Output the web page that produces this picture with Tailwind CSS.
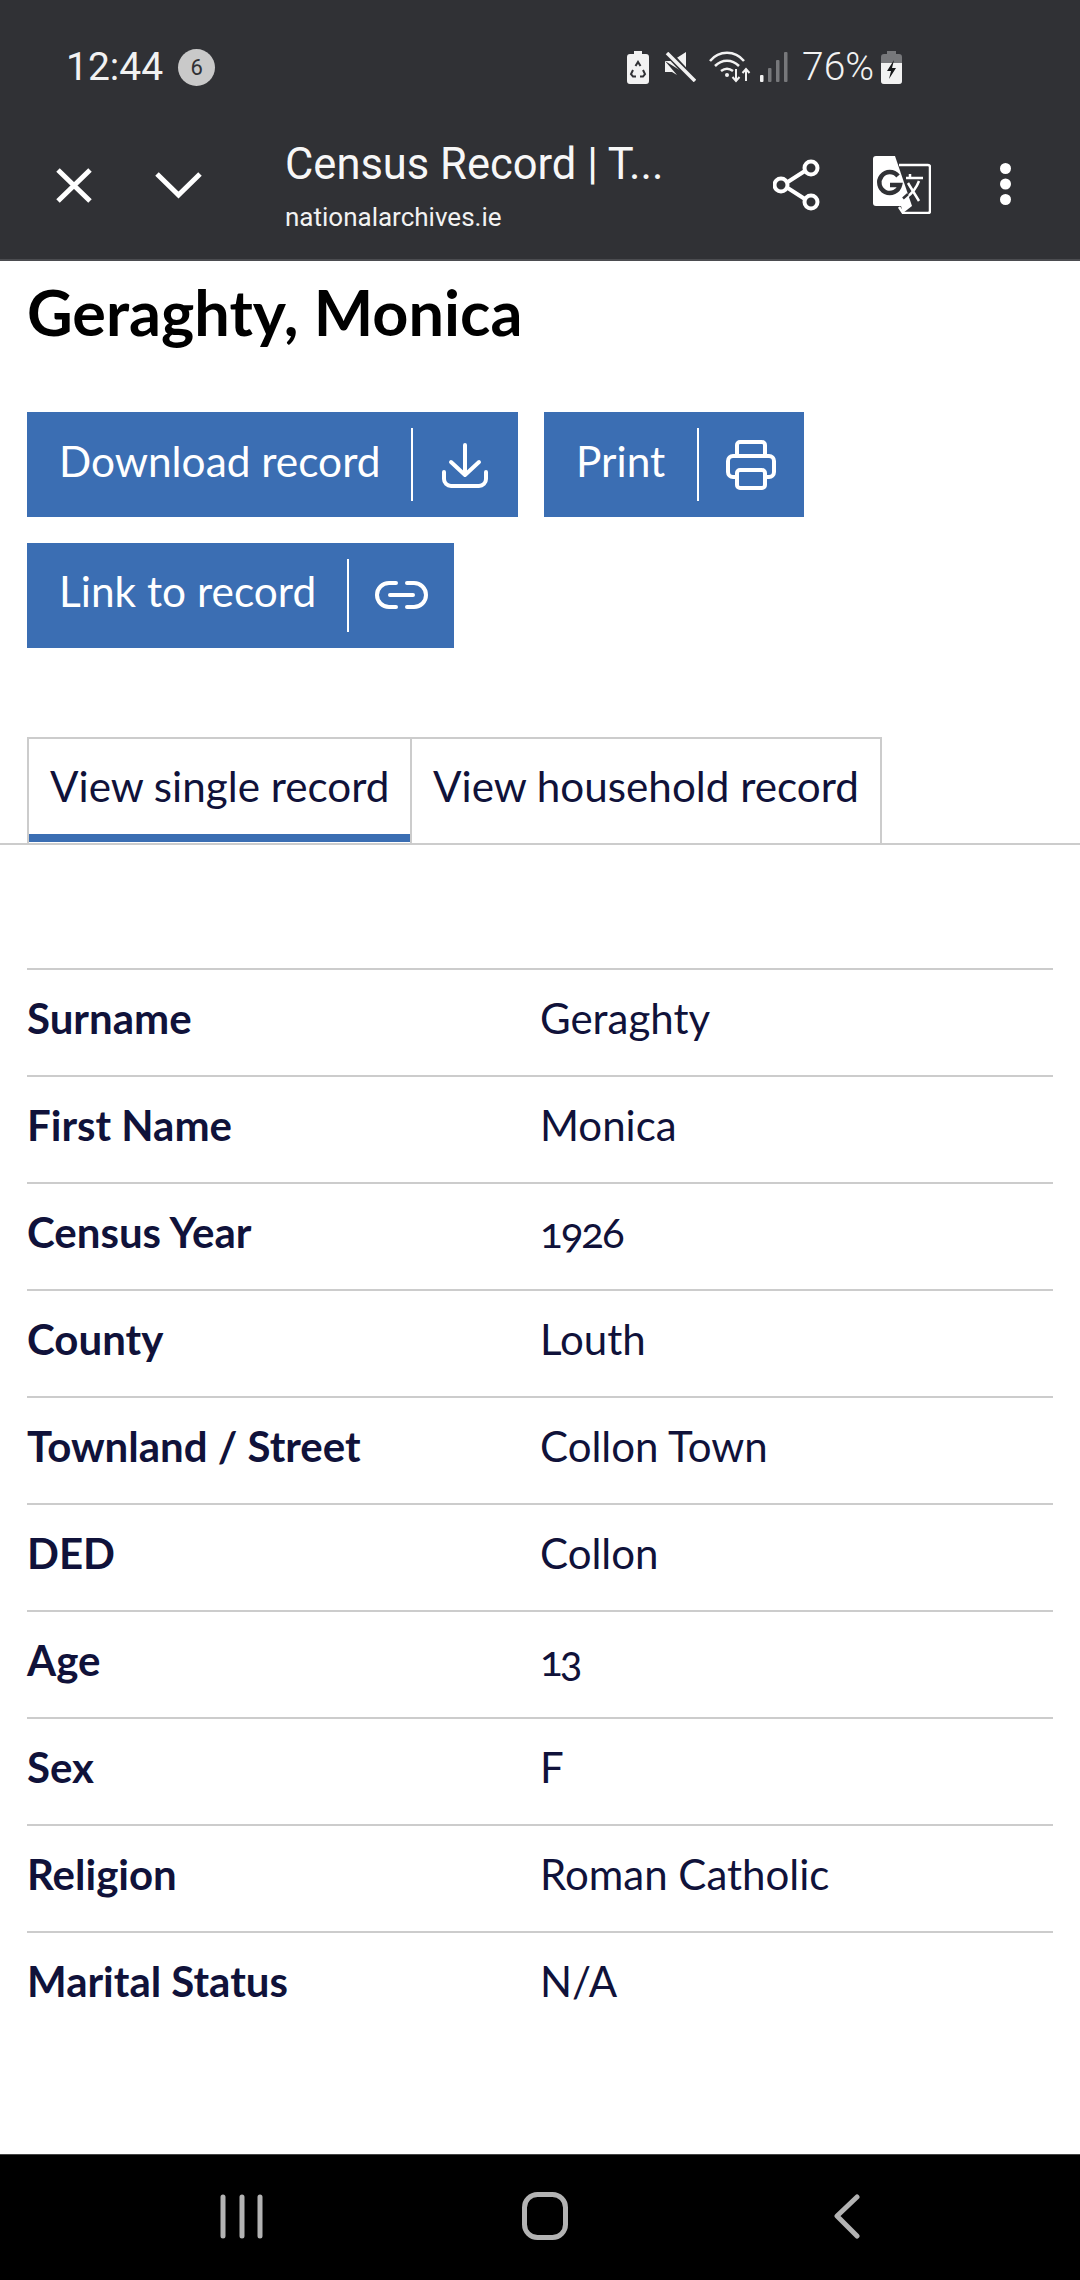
<!DOCTYPE html>
<html lang="en">
<head>
    <meta charset="UTF-8">
    <meta name="viewport" content="width=device-width, initial-scale=1.0">
    <title>Census Record</title>
    <script src="https://cdn.jsdelivr.net/npm/@tailwindcss/browser@4"></script>
</head>
<body class="w-[1080px] h-[2280px] overflow-hidden flex flex-col bg-white font-['Lato',sans-serif]">

    <!-- Browser chrome -->
    <header class="h-[261px] shrink-0 bg-[#303135] border-b-2 border-[#4b4c50] text-white font-['Roboto',sans-serif]">
        <div class="h-[134px] pt-[44px] pl-[66px] pr-[178px] flex items-start justify-between">
            <div class="flex items-center h-[46px]">
                <span class="text-[39px] leading-none text-[#f2f2f2]">12:44</span>
                <span class="ml-[15px] w-[37px] h-[37px] rounded-full bg-[#c9c9c9] text-[#303135] text-[22px] flex items-center justify-center">6</span>
            </div>
            <div class="flex items-center h-[46px]">
                <!-- recycle battery -->
                <svg class="w-[22px] h-[33px]" viewBox="0 0 22 33">
                    <path d="M7 0h8v3h4a3 3 0 0 1 3 3v24a3 3 0 0 1-3 3H3a3 3 0 0 1-3-3V6a3 3 0 0 1 3-3h4z" fill="#f2f2f2"/>
                    <path d="M8.500 15L11 11l2.500 4M16 19l2 4-2 2.500h-3M9 25.500H6L4 23l2-4" stroke="#303135" stroke-width="2" fill="none"/>
                </svg>
                <!-- mute -->
                <svg class="ml-[16px] w-[31px] h-[30px]" viewBox="0 0 31 30">
                    <path d="M0 9h7L21 0v22z M0 9v11h7l5 3z" fill="#f2f2f2"/>
                    <path d="M3 1l27 29" stroke="#303135" stroke-width="7"/>
                    <path d="M2 1l28 28" stroke="#f2f2f2" stroke-width="3.500"/>
                </svg>
                <!-- wifi -->
                <svg class="ml-[13px] w-[42px] h-[32px]" viewBox="0 0 42 32" fill="none" stroke="#f2f2f2" stroke-width="2.500">
                    <path d="M1 10C10 -1 26 -1 35 10"/>
                    <path d="M6 15C13 8 23 8 30 15"/>
                    <path d="M12 20c4-3 8-3 12 0"/>
                    <circle cx="18" cy="24" r="2" fill="#f2f2f2" stroke="none"/>
                    <path d="M27 18v12M23.500 26l3.500 4 3.500-4M37 30V18M33.500 22l3.500-4 3.500 4" stroke-width="2"/>
                </svg>
                <!-- signal -->
                <svg class="ml-[9px] w-[28px] h-[30px]" viewBox="0 0 28 30">
                    <rect x="0" y="23" width="3.500" height="7" rx="1" fill="#f2f2f2"/>
                    <rect x="8" y="16" width="3.500" height="14" rx="1" fill="#77787b"/>
                    <rect x="16" y="8" width="3.500" height="22" rx="1" fill="#77787b"/>
                    <rect x="24" y="0" width="3.500" height="30" rx="1" fill="#77787b"/>
                </svg>
                <span class="ml-[14px] text-[39px] leading-none font-light text-[#f2f2f2] w-[79px] whitespace-nowrap">76%</span>
                <!-- charging battery -->
                <svg class="w-[21px] h-[33px]" viewBox="0 0 21 33">
                    <path d="M6 0h9v3h3a3 3 0 0 1 3 3v24a3 3 0 0 1-3 3H3a3 3 0 0 1-3-3V6a3 3 0 0 1 3-3h3z" fill="#77787b"/>
                    <path d="M0 12h21v18a3 3 0 0 1-3 3H3a3 3 0 0 1-3-3z" fill="#f2f2f2"/>
                    <path d="M13 9l-7 11h4l-2 8 7-11h-4z" fill="#17181a"/>
                </svg>
            </div>
        </div>
        <div class="h-[125px] flex items-start">
            <svg class="ml-[56px] mt-[34px] w-[36px] h-[35px]" viewBox="0 0 36 35" fill="none" stroke="#fff" stroke-width="5">
                <path d="M2 2l32 31M34 2L2 33"/>
            </svg>
            <svg class="ml-[63px] mt-[38px] w-[47px] h-[27px]" viewBox="0 0 47 27" fill="none" stroke="#fff" stroke-width="5">
                <path d="M2 2l21.500 21L45 2"/>
            </svg>
            <div class="ml-[83px] w-[400px] mt-[5px]">
                <p class="text-[43.5px] leading-[52px] text-[#f7f7f7] whitespace-nowrap">Census Record | T...</p>
                <p class="text-[26px] leading-[34px] mt-[9px] text-[#f2f2f2]">nationalarchives.ie</p>
            </div>
            <svg class="ml-[88px] mt-[25px] w-[47px] h-[52px]" viewBox="0 0 47 52" fill="none" stroke="#fff" stroke-width="4">
                <path d="M35 10L10 26l25 16"/>
                <circle cx="38" cy="9" r="6.500" fill="#303135"/>
                <circle cx="8" cy="26" r="6.500" fill="#303135"/>
                <circle cx="38" cy="43" r="6.500" fill="#303135"/>
            </svg>
            <svg class="ml-[53px] mt-[22px] w-[58px] h-[58px]" viewBox="0 0 58 58">
                <path d="M26 9h29a2 2 0 0 1 2 2v44a2 2 0 0 1-2 2H30l-4-6" fill="#303135" stroke="#fff" stroke-width="2.500"/>
                <path d="M3 0h19l17 50H3a3 3 0 0 1-3-3V3a3 3 0 0 1 3-3z" fill="#fff"/>
                <path d="M28 50h11l-9 7z" fill="#fff"/>
                <path d="M25 20a10.500 10.500 0 1 0 2 9H17" fill="none" stroke="#303135" stroke-width="4.500"/>
                <path d="M33 22h17M37 18v4M46 25c-3 8-8 13-12 16M35 27l11 18" fill="none" stroke="#fff" stroke-width="2.500"/>
                <path d="M35 38l-5 4.500" fill="none" stroke="#303135" stroke-width="2.500"/>
            </svg>
            <svg class="ml-[69px] mt-[29px] w-[11px] h-[42px]" viewBox="0 0 11 42" fill="#fff">
                <circle cx="5.500" cy="5.500" r="5.500"/>
                <circle cx="5.500" cy="21" r="5.500"/>
                <circle cx="5.500" cy="36.500" r="5.500"/>
            </svg>
        </div>
    </header>

    <!-- Page content -->
    <main class="flex-1 min-h-0">
        <h1 class="ml-[27px] mt-[20px] text-[63px] leading-[62px] font-bold text-black">Geraghty, Monica</h1>

        <div class="mt-[69px] ml-[27px] w-[800px] flex flex-wrap gap-x-[26px] gap-y-[26px]">
            <a class="h-[105px] w-[491px] bg-[#3b6eb3] text-white flex items-center text-[42.4px]">
                <span class="pl-[32px] pb-[8px] w-[384px] whitespace-nowrap">Download record</span>
                <span class="w-[2px] h-[73px] bg-white"></span>
                <svg class="ml-[29px] w-[46px] h-[46px]" viewBox="0 0 46 46" fill="none" stroke="#fff" stroke-width="4" stroke-linecap="round" stroke-linejoin="round">
                    <path d="M23 3v30M9 20l14 13 14-13M2 30v7a7 7 0 0 0 7 7h28a7 7 0 0 0 7-7v-7"/>
                </svg>
            </a>
            <a class="h-[105px] w-[260px] bg-[#3b6eb3] text-white flex items-center text-[42.4px]">
                <span class="pl-[32px] pb-[8px] w-[153px]">Print</span>
                <span class="w-[2px] h-[73px] bg-white"></span>
                <svg class="ml-[27px] w-[50px] h-[50px]" viewBox="0 0 50 50" fill="none" stroke="#fff" stroke-width="4" stroke-linejoin="round">
                    <path d="M11 16V5a3 3 0 0 1 3-3h22a3 3 0 0 1 3 3v11"/>
                    <path d="M11 37H7a5 5 0 0 1-5-5V21a5 5 0 0 1 5-5h36a5 5 0 0 1 5 5v11a5 5 0 0 1-5 5h-4"/>
                    <path d="M11 33a3 3 0 0 1 3-3h22a3 3 0 0 1 3 3v12a3 3 0 0 1-3 3H14a3 3 0 0 1-3-3z"/>
                </svg>
            </a>
            <a class="h-[105px] w-[427px] bg-[#3b6eb3] text-white flex items-center text-[42.4px]">
                <span class="pl-[32px] pb-[10px] w-[320px] whitespace-nowrap">Link to record</span>
                <span class="w-[2px] h-[73px] bg-white"></span>
                <svg class="ml-[26px] mb-[2px] w-[53px] h-[28px]" viewBox="0 0 53 28" fill="none" stroke="#fff" stroke-width="4" stroke-linecap="round">
                    <path d="M21 2H14a12 12 0 0 0 0 24h7M32 2h7a12 12 0 0 1 0 24h-7M15 14h23"/>
                </svg>
            </a>
        </div>

        <!-- Tabs -->
        <div class="mt-[89px] h-[108px] border-b-2 border-[#ccc] pl-[27px] flex">
            <div class="w-[385px] h-[107px] border-2 border-b-0 border-[#ccc] relative pl-[21px] pt-[17px] text-[42.2px] leading-[60px] text-[#10123a] whitespace-nowrap">
                View single record
                <span class="absolute left-0 right-0 bottom-[2px] h-[8px] bg-[#3b6eb3]"></span>
            </div>
            <div class="w-[470px] h-[107px] border-2 border-b-0 border-l-0 border-[#ccc] pl-[21px] pt-[17px] text-[42.2px] leading-[60px] text-[#10123a] whitespace-nowrap">View household record</div>
        </div>

        <!-- Record table -->
        <dl class="mt-[123px] mx-[27px] text-[42px] text-[#10123a]">
            <div class="h-[107px] border-t-2 border-[#ccc] flex items-center pb-[8px]">
                <dt class="w-[513px] font-bold">Surname</dt><dd>Geraghty</dd>
            </div>
            <div class="h-[107px] border-t-2 border-[#ccc] flex items-center pb-[8px]">
                <dt class="w-[513px] font-bold">First Name</dt><dd>Monica</dd>
            </div>
            <div class="h-[107px] border-t-2 border-[#ccc] flex items-center pb-[8px]">
                <dt class="w-[513px] font-bold">Census Year</dt><dd class="oldstyle-nums tracking-[-2px]">1926</dd>
            </div>
            <div class="h-[107px] border-t-2 border-[#ccc] flex items-center pb-[8px]">
                <dt class="w-[513px] font-bold">County</dt><dd>Louth</dd>
            </div>
            <div class="h-[107px] border-t-2 border-[#ccc] flex items-center pb-[8px]">
                <dt class="w-[513px] font-bold">Townland / Street</dt><dd>Collon Town</dd>
            </div>
            <div class="h-[107px] border-t-2 border-[#ccc] flex items-center pb-[8px]">
                <dt class="w-[513px] font-bold">DED</dt><dd>Collon</dd>
            </div>
            <div class="h-[107px] border-t-2 border-[#ccc] flex items-center pb-[8px]">
                <dt class="w-[513px] font-bold">Age</dt><dd class="oldstyle-nums tracking-[-3px]">13</dd>
            </div>
            <div class="h-[107px] border-t-2 border-[#ccc] flex items-center pb-[8px]">
                <dt class="w-[513px] font-bold">Sex</dt><dd>F</dd>
            </div>
            <div class="h-[107px] border-t-2 border-[#ccc] flex items-center pb-[8px]">
                <dt class="w-[513px] font-bold">Religion</dt><dd>Roman Catholic</dd>
            </div>
            <div class="h-[107px] border-t-2 border-[#ccc] flex items-center pb-[8px]">
                <dt class="w-[513px] font-bold">Marital Status</dt><dd>N/A</dd>
            </div>
        </dl>
    </main>

    <!-- Android nav bar -->
    <nav class="h-[126px] shrink-0 bg-black border-t border-[#444] relative">
        <svg class="absolute left-[220px] top-[39px] w-[44px] h-[45px]" viewBox="0 0 44 45" stroke="#b3b3b3" stroke-width="5" stroke-linecap="round">
            <path d="M3 3v39M22 3v39M40 3v39"/>
        </svg>
        <svg class="absolute left-[522px] top-[37px] w-[46px] h-[48px]" viewBox="0 0 46 48" fill="none" stroke="#b3b3b3" stroke-width="5">
            <rect x="2.500" y="2.500" width="41" height="43" rx="13"/>
        </svg>
        <svg class="absolute left-[834px] top-[39px] w-[26px] h-[45px]" viewBox="0 0 26 45" fill="none" stroke="#b3b3b3" stroke-width="5" stroke-linecap="round" stroke-linejoin="round">
            <path d="M23 3L3 22l20 20"/>
        </svg>
    </nav>
</body>
</html>
